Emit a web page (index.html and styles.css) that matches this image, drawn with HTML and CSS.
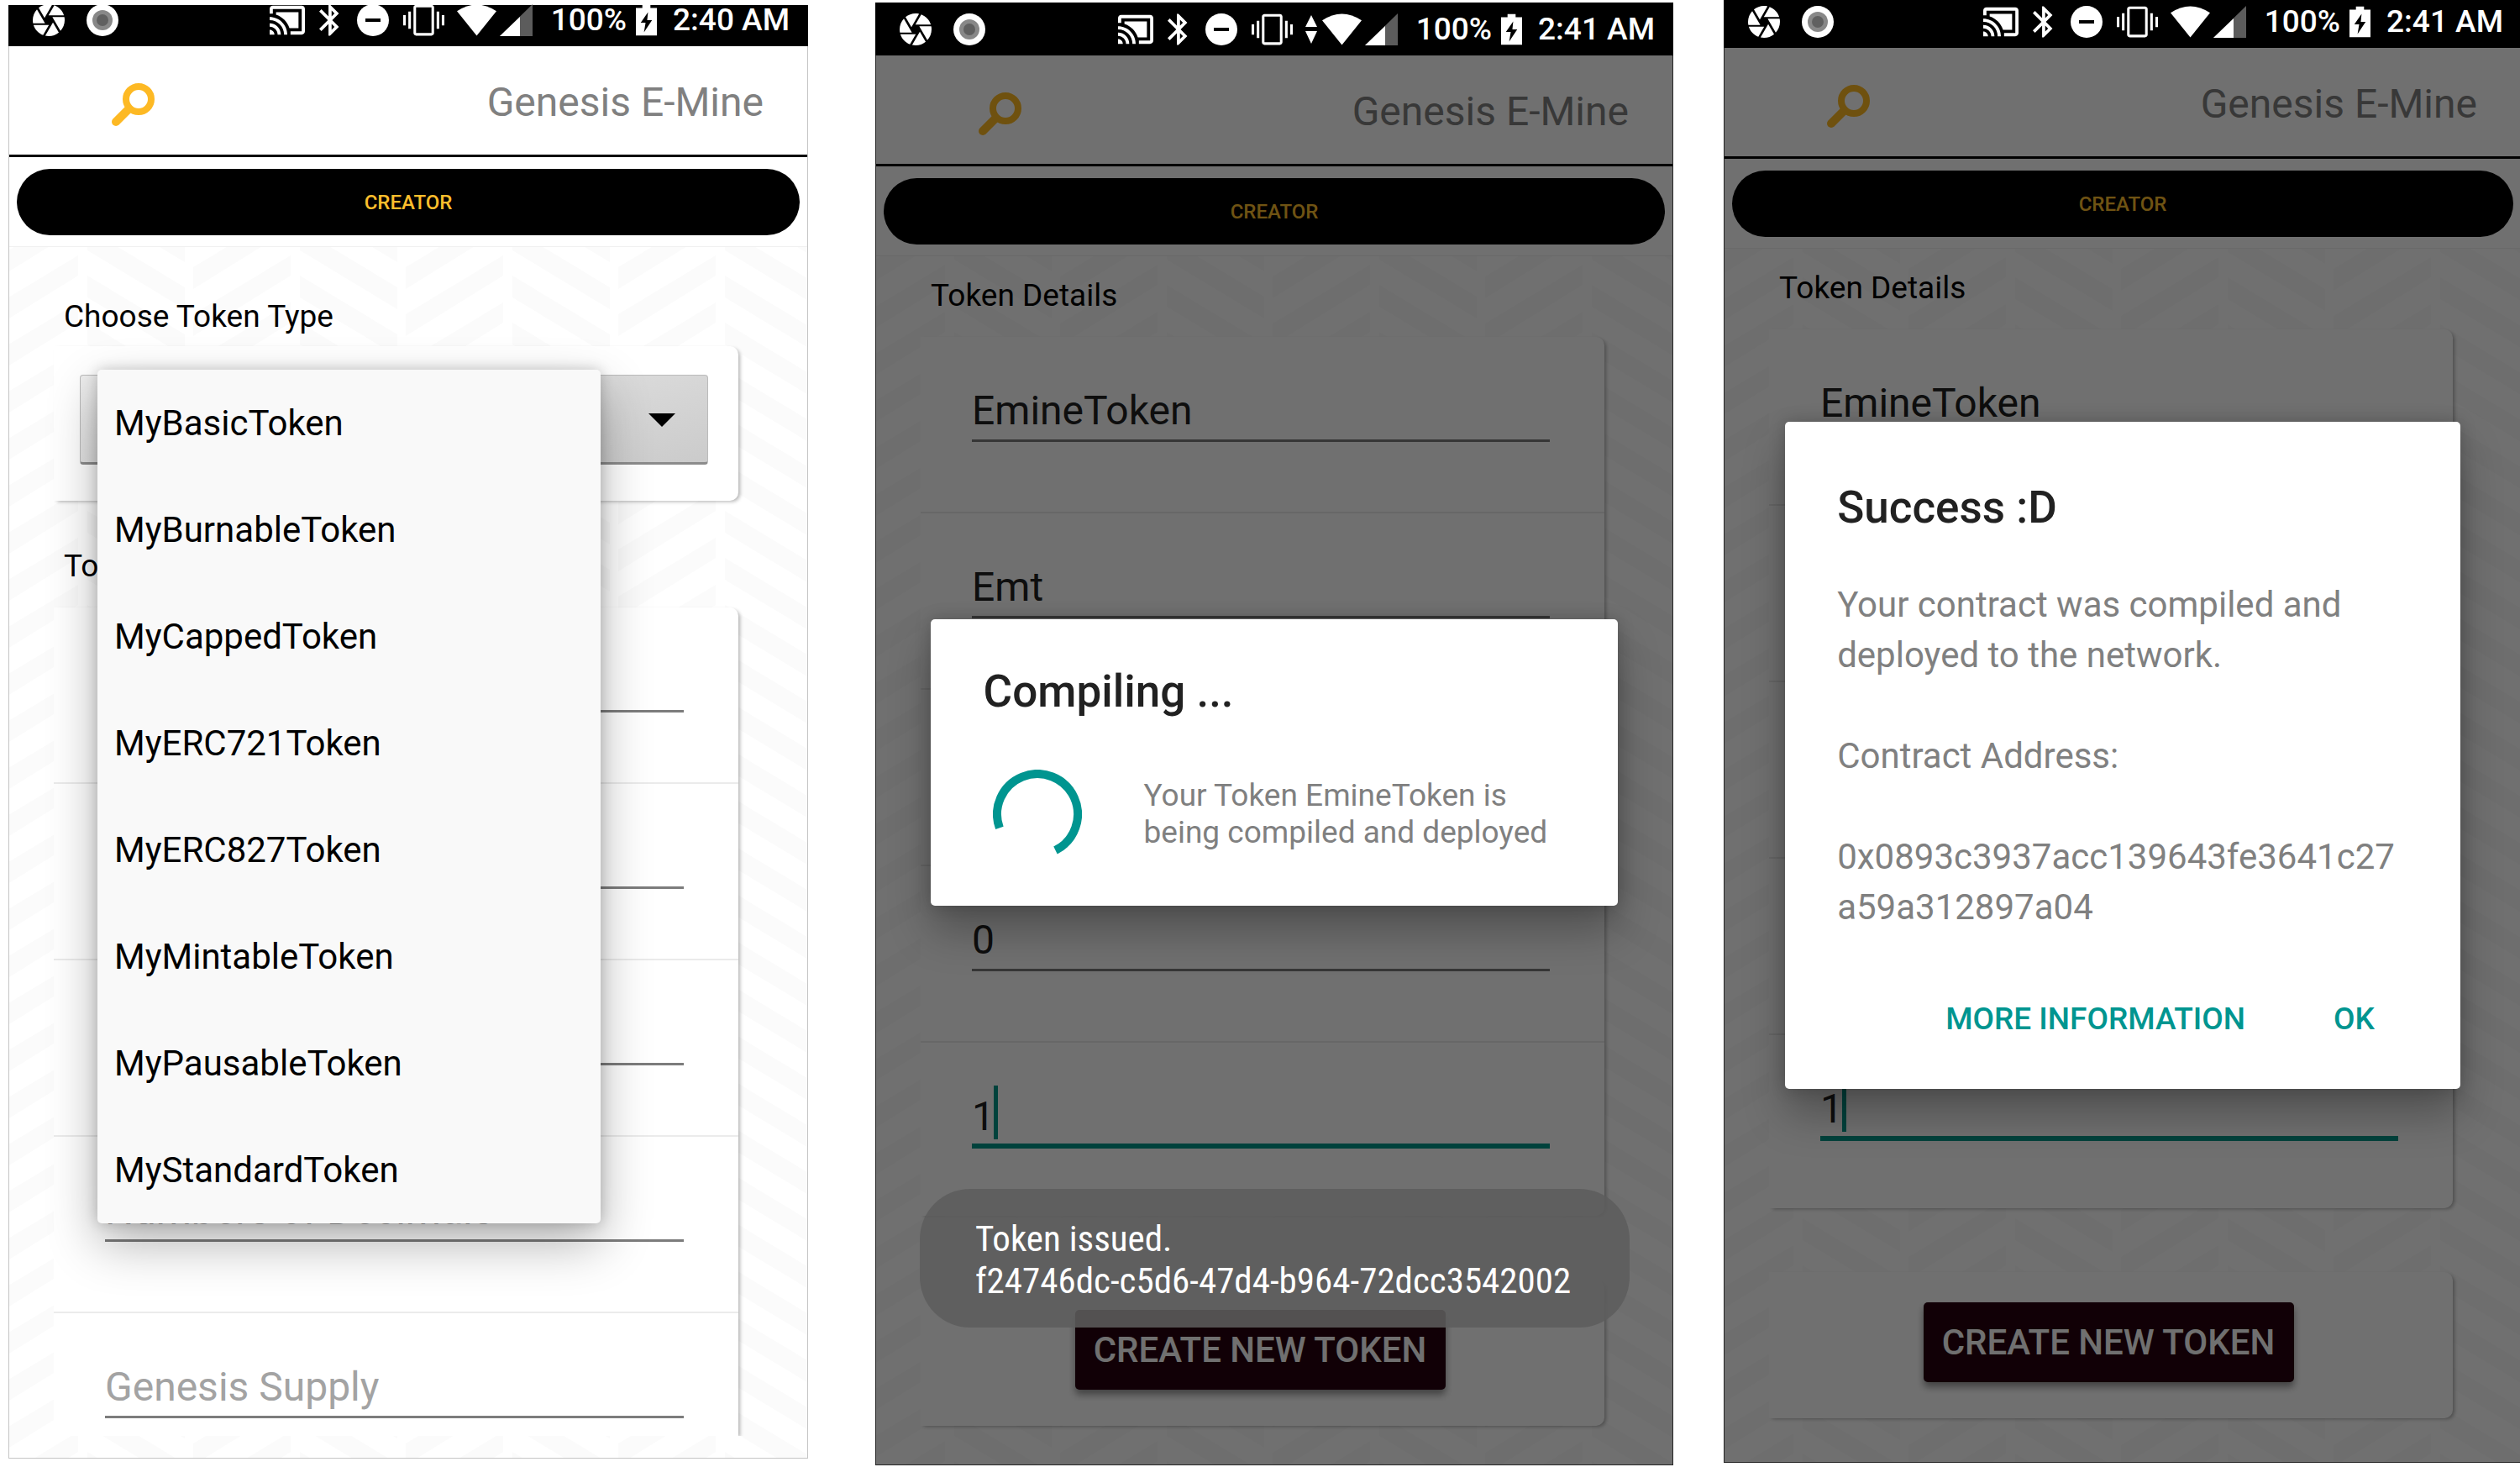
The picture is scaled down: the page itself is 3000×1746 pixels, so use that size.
FILE: index.html
```html
<!DOCTYPE html>
<html lang="en">
<head>
<meta charset="utf-8">
<meta name="viewport" content="width=device-width, initial-scale=1">
<title>Genesis E-Mine</title>
<link rel="stylesheet" href="styles.css">
</head>
<body>
<svg class="sprite" aria-hidden="true">
  <symbol id="aperture" viewBox="2 2 20 20"><path d="M9.4 10.5l4.77-8.26C13.47 2.09 12.75 2 12 2c-2.4 0-4.6.85-6.32 2.25l3.66 6.35.06-.1zM21.54 9c-.92-2.92-3.15-5.26-6-6.34L11.88 9h9.66zm.26 1h-7.49l.29.5 4.76 8.25C21 16.97 22 14.61 22 12c0-.69-.07-1.35-.2-2zM8.54 12l-3.9-6.75C3.01 7.03 2 9.39 2 12c0 .69.07 1.35.2 2h7.49l-1.15-2zm-6.08 3c.92 2.92 3.15 5.26 6 6.34L12.12 15H2.46zm11.27 0l-3.9 6.76c.7.15 1.42.24 2.17.24 2.4 0 4.6-.85 6.32-2.25l-3.66-6.35-.93 1.6z"/></symbol>
  <symbol id="record" viewBox="0 0 38 38"><circle cx="19" cy="19" r="19"/><circle cx="19" cy="19" r="12" fill="#888"/><circle cx="19" cy="19" r="7" fill="#606060"/></symbol>
  <symbol id="cast" viewBox="1 3 22 18"><path d="M1 18v3h3c0-1.66-1.34-3-3-3zm0-4v2c2.76 0 5 2.24 5 5h2c0-3.87-3.13-7-7-7zm18-7H5v1.63c3.96 1.28 7.09 4.41 8.37 8.37H19V7zM1 10v2c4.97 0 9 4.03 9 9h2c0-6.08-4.93-11-11-11zm20-7H3c-1.1 0-2 .9-2 2v3h2V5h18v14h-7v2h7c1.1 0 2-.9 2-2V5c0-1.1-.9-2-2-2z"/></symbol>
  <symbol id="bluetooth" viewBox="5 2 13 20"><path d="M17.71 7.71L12 2h-1v7.59L6.41 5 5 6.41 10.59 12 5 17.59 6.41 19 11 14.41V22h1l5.71-5.71-4.3-4.29 4.3-4.29zM13 5.83l1.88 1.88L13 9.59V5.83zm1.88 10.46L13 18.17v-3.76l1.88 1.88z"/></symbol>
  <symbol id="dnd" viewBox="0 0 38 38"><circle cx="19" cy="19" r="19"/><path d="M10 17h18v4H10z" fill="#000"/></symbol>
  <symbol id="vibrate" viewBox="0 3 24 18"><path d="M0 15h1.500V9H0v6zm3 2h1.500V7H3v10zm19.500-8v6h1.500V9h-1.500zm-3 8h1.500V7h-1.500v10zM16.500 3h-9C6.670 3 6 3.670 6 4.500v15c0 .83.67 1.500 1.500 1.500h9c.83 0 1.500-.67 1.500-1.500v-15c0-.83-.67-1.500-1.500-1.500zM16.500 19.500H7.500V4.500h9v15z"/></symbol>
  <symbol id="traffic" viewBox="0 0 14 34"><path d="M7 0l7 14H0zM0 19h14L7 34z"/></symbol>
  <symbol id="wifi" viewBox="0 0 48 38"><path d="M0 8Q24-8 48 8L24 38z"/></symbol>
  <symbol id="signal" viewBox="0 0 39 38"><path d="M39 0v38H0z" fill="#5c5c5c"/><path d="M24 15v23H0z"/></symbol>
  <symbol id="battery" viewBox="0 0 26 38"><path fill-rule="evenodd" d="M8 0h10v4h8v34H0V4h8zM15 9L6 22h6l-2 12 10-15h-6z"/></symbol>
  <symbol id="search" viewBox="0 -6 52 58"><circle cx="32" cy="19" r="15" fill="none" stroke="currentColor" stroke-width="8"/><path d="M20 31L5 46" stroke="currentColor" stroke-width="10" stroke-linecap="round"/></symbol>
</svg>

<main class="gallery">

  <section class="phone phone-picker" aria-label="Choose token type">
    <div class="status">
      <svg class="i-round"><use href="#aperture"/></svg>
      <svg class="i-round"><use href="#record"/></svg>
      <div class="status-right">
        <svg class="i-cast"><use href="#cast"/></svg>
        <svg class="i-bluetooth"><use href="#bluetooth"/></svg>
        <svg class="i-round"><use href="#dnd"/></svg>
        <svg class="i-vibrate"><use href="#vibrate"/></svg>
        <svg class="i-wifi"><use href="#wifi"/></svg>
        <svg class="i-signal"><use href="#signal"/></svg>
        <span>100%</span>
        <svg class="i-battery"><use href="#battery"/></svg>
        <time class="clock">2:40 AM</time>
      </div>
    </div>
    <div class="app">
      <header class="bar"><svg class="i-search"><use href="#search"/></svg><h1>Genesis E-Mine</h1></header>
      <nav class="tabs"><button class="tab" type="button">CREATOR</button></nav>
      <form class="content">
        <label class="caption" for="type">Choose Token Type</label>
        <div class="card picker">
          <select id="type" class="select"></select>
          <ul class="menu">
            <li><button type="button">MyBasicToken</button></li>
            <li><button type="button">MyBurnableToken</button></li>
            <li><button type="button">MyCappedToken</button></li>
            <li><button type="button">MyERC721Token</button></li>
            <li><button type="button">MyERC827Token</button></li>
            <li><button type="button">MyMintableToken</button></li>
            <li><button type="button">MyPausableToken</button></li>
            <li><button type="button">MyStandardToken</button></li>
          </ul>
        </div>
        <h2 class="caption">Token Details</h2>
        <div class="card fields">
          <div class="row"><input aria-label="Name"></div>
          <div class="row"><input aria-label="Symbol"></div>
          <div class="row"><input aria-label="Cap"></div>
          <div class="row"><input aria-label="Numbers of Decimals" placeholder="Numbers of Decimals"></div>
          <div class="row"><input aria-label="Genesis Supply" placeholder="Genesis Supply"></div>
        </div>
      </form>
    </div>
  </section>

  <section class="phone phone-compiling" aria-label="Compiling">
    <div class="status">
      <svg class="i-round"><use href="#aperture"/></svg>
      <svg class="i-round"><use href="#record"/></svg>
      <div class="status-right">
        <svg class="i-cast"><use href="#cast"/></svg>
        <svg class="i-bluetooth"><use href="#bluetooth"/></svg>
        <svg class="i-round"><use href="#dnd"/></svg>
        <svg class="i-vibrate"><use href="#vibrate"/></svg>
        <svg class="i-traffic"><use href="#traffic"/></svg>
        <svg class="i-wifi"><use href="#wifi"/></svg>
        <svg class="i-signal"><use href="#signal"/></svg>
        <span>100%</span>
        <svg class="i-battery"><use href="#battery"/></svg>
        <time class="clock">2:41 AM</time>
      </div>
    </div>
    <div class="app">
      <header class="bar"><svg class="i-search"><use href="#search"/></svg><h1>Genesis E-Mine</h1></header>
      <nav class="tabs"><button class="tab" type="button">CREATOR</button></nav>
      <form class="content">
        <h2 class="caption">Token Details</h2>
        <div class="card fields">
          <div class="row"><input aria-label="Name" value="EmineToken"></div>
          <div class="row"><input aria-label="Symbol" value="Emt"></div>
          <div class="row"><input aria-label="Cap"></div>
          <div class="row"><input aria-label="Numbers of Decimals" value="0"></div>
          <div class="row active"><input aria-label="Genesis Supply" value="1"><span class="caret"></span></div>
        </div>
        <div class="card submit"><button class="create" type="button">CREATE NEW TOKEN</button></div>
      </form>
      <div class="scrim">
        <div class="dialog progress" role="dialog" aria-labelledby="compiling">
          <h2 id="compiling">Compiling ...</h2>
          <div class="progress-body">
            <svg class="spinner" viewBox="0 0 106 106"><path d="M7.900 69.400A48 48 0 1 1 74.500 96" fill="none" stroke="#009590" stroke-width="10"/></svg>
            <p>Your Token EmineToken is<br>being compiled and deployed</p>
          </div>
        </div>
      </div>
      <div class="toast" role="status">Token issued.<br>f24746dc-c5d6-47d4-b964-72dcc3542002</div>
    </div>
  </section>

  <section class="phone phone-success" aria-label="Success">
    <div class="status">
      <svg class="i-round"><use href="#aperture"/></svg>
      <svg class="i-round"><use href="#record"/></svg>
      <div class="status-right">
        <svg class="i-cast"><use href="#cast"/></svg>
        <svg class="i-bluetooth"><use href="#bluetooth"/></svg>
        <svg class="i-round"><use href="#dnd"/></svg>
        <svg class="i-vibrate"><use href="#vibrate"/></svg>
        <svg class="i-wifi"><use href="#wifi"/></svg>
        <svg class="i-signal"><use href="#signal"/></svg>
        <span>100%</span>
        <svg class="i-battery"><use href="#battery"/></svg>
        <time class="clock">2:41 AM</time>
      </div>
    </div>
    <div class="app">
      <header class="bar"><svg class="i-search"><use href="#search"/></svg><h1>Genesis E-Mine</h1></header>
      <nav class="tabs"><button class="tab" type="button">CREATOR</button></nav>
      <form class="content">
        <h2 class="caption">Token Details</h2>
        <div class="card fields">
          <div class="row"><input aria-label="Name" value="EmineToken"></div>
          <div class="row"><input aria-label="Symbol"></div>
          <div class="row"><input aria-label="Cap"></div>
          <div class="row"><input aria-label="Numbers of Decimals"></div>
          <div class="row active"><input aria-label="Genesis Supply" value="1"><span class="caret"></span></div>
        </div>
        <div class="card submit"><button class="create" type="button">CREATE NEW TOKEN</button></div>
      </form>
      <div class="scrim">
        <div class="dialog result" role="dialog" aria-labelledby="success">
          <h2 id="success">Success :D</h2>
          <p>Your contract was compiled and deployed to the network.</p>
          <p>Contract Address:</p>
          <p class="address">0x0893c3937acc139643fe3641c27<wbr>a59a312897a04</p>
          <div class="actions"><button type="button">MORE INFORMATION</button><button type="button">OK</button></div>
        </div>
      </div>
    </div>
  </section>

</main>
</body>
</html>
```
FILE: styles.css
```css
* { box-sizing: border-box; }

body {
  margin: 0;
  background: #fff;
  color: #000;
  font-family: Roboto, "Liberation Sans", sans-serif;
  overflow: hidden;
}

h1, h2, p, ul { margin: 0; padding: 0; font-weight: 400; }
button, input, select { font-family: inherit; border-radius: 0; outline: 0; }
button { cursor: pointer; border: 0; padding: 0; background: none; }
.sprite { display: none; }

.gallery {
  display: flex;
  align-items: flex-start;
  padding-left: 10px;
  margin-right: -2px;
}

.phone { flex: 950 1 0; min-width: 0; }
.phone-picker { flex-grow: 952; margin-top: 6px; }
.phone-compiling { margin: 3px 60px 0 80px; }

/* status bar */
.status {
  display: flex;
  align-items: flex-end;
  height: 63px;
  padding: 0 22px 12px 29px;
  gap: 26px;
  background: #000;
  color: #fff;
  fill: #fff;
  font-size: 37px;
  font-weight: 500;
  line-height: 38px;
}
.phone-picker .status { height: 49px; }
.phone-success .status { height: 57px; }
.status svg { flex: none; height: 38px; }
.status-right { display: flex; align-items: center; margin-left: auto; }
.i-round { width: 38px; }
.status .i-cast { width: 42px; height: 36px; }
.i-bluetooth { width: 24px; margin: 0 21px 0 17px; }
.i-vibrate { width: 49px; margin: 0 15px 0 17px; }
.i-traffic { width: 14px; margin-right: 6px; }
.i-wifi { width: 47px; margin-right: 4px; }
.i-signal { width: 39px; margin-right: 22px; }
.i-battery { width: 25px; margin: 0 19px 0 11px; }

/* application frame */
.app {
  position: relative;
  border: solid #c4c4c4;
  border-width: 0 1px 1px;
}
.phone-compiling .app, .phone-success .app { border-color: #555; }
.bar {
  display: flex;
  align-items: center;
  justify-content: space-between;
  padding: 39px 52px 34px 122px;
  border-bottom: 3px solid #000;
}
.bar h1 { font-size: 48px; line-height: 56px; color: #808080; }
.i-search { width: 52px; height: 58px; margin: -1px 0; color: #fdb924; }
.tabs { padding: 14px 9px 13px; border-bottom: 1px solid #f0f0f0; }
.tab {
  display: block;
  width: 100%;
  height: 79px;
  border-radius: 40px;
  background: #000;
  color: #fdbe2c;
  font-size: 24px;
  font-weight: 500;
}

.content {
  padding: 25px 81px 46px 53px;
  background: #fff url("data:image/svg+xml,%3Csvg xmlns='http://www.w3.org/2000/svg' width='253' height='56'%3E%3Cg fill='%23fbfbfb'%3E%3Cpath d='M0-78l116 70v26L0-52zM0-22l116 70v26L0 4zM0 34l116 70v26L0 60zM242-46L126 24v26L242-22zM242 10L126 80v26L242 34zM242-102L126-32v26L242-76z'/%3E%3C/g%3E%3C/svg%3E") 93px 0;
}
.phone-picker .content { padding: 61px 82px 26px 53px; }
.phone-success .content { padding-bottom: 52px; }

.caption {
  display: block;
  padding-left: 12px;
  margin-bottom: 27px;
  font-size: 37px;
  line-height: 44px;
}
.phone-picker label.caption { margin-bottom: 13px; }

.card {
  background: #fff;
  border-radius: 0 10px 10px 0;
  box-shadow: 3px 2px 4px -1px rgba(0, 0, 0, .3);
}
.fields, .submit { clip-path: inset(-12px -12px -12px 0); }
.phone-picker .fields { border-bottom-right-radius: 0; clip-path: inset(-12px -12px 0 0); }

/* token type picker */
.picker { position: relative; padding: 34px 36px 43px 31px; margin-bottom: 56px; }
.select {
  appearance: none;
  display: block;
  width: 100%;
  height: 107px;
  border: 1px solid #bbb;
  border-bottom: 3px solid #8c8c8c;
  border-radius: 4px;
  background:
    url("data:image/svg+xml,%3Csvg xmlns='http://www.w3.org/2000/svg' width='32' height='18'%3E%3Cpath d='M0 2h32L16 18z'/%3E%3C/svg%3E") right 38px center no-repeat,
    linear-gradient(165deg, #eee, #cbcbcb);
}
.menu {
  position: absolute;
  z-index: 1;
  top: 28px;
  left: 52px;
  right: 164px;
  list-style: none;
  background: #f9f9f9;
  border-radius: 5px;
  box-shadow: 0 24px 60px rgba(0, 0, 0, .3), 0 0 16px rgba(0, 0, 0, .2);
}
.menu button {
  display: block;
  width: 100%;
  height: 127px;
  padding: 0 20px;
  color: #000;
  font-size: 42px;
  text-align: left;
}

/* form rows */
.row {
  position: relative;
  height: 210px;
  padding: 59px 65px 0 61px;
  border-bottom: 2px solid #ebebeb;
}
.row:last-child { height: 206px; border-bottom: 0; }
.phone-picker .row:last-child { height: 146px; }
.row input {
  display: block;
  width: 100%;
  height: 66px;
  padding: 0 0 7px;
  border: 0;
  border-bottom: 3px solid #7c7c7c;
  background: none;
  color: #212121;
  font-size: 48px;
  line-height: 56px;
}
.row input::placeholder { color: #a3a3a3; opacity: 1; }
.row.active input { height: 67px; padding-bottom: 5px; border-bottom: 6px solid #009688; }
.caret { position: absolute; top: 51px; left: 87px; width: 5px; height: 64px; background: #009688; }

.submit { display: flex; justify-content: center; margin-top: 76px; padding: 36px 6px 43px 0; }
.create {
  width: 441px;
  height: 95px;
  border-radius: 5px;
  background: #27020e;
  box-shadow: 0 6px 9px rgba(0, 0, 0, .4);
  color: #fff;
  font-size: 42px;
  font-weight: 500;
}

/* dialogs */
.scrim {
  position: absolute;
  inset: 0 -1px -1px;
  display: flex;
  align-items: center;
  justify-content: center;
  background: rgba(0, 0, 0, .56);
}
.phone-compiling .scrim { padding-top: 4px; }
.dialog {
  background: #fff;
  border-radius: 5px;
  box-shadow: 0 30px 50px rgba(0, 0, 0, .28), 0 0 20px rgba(0, 0, 0, .2);
  color: #808080;
}
.dialog h2 { color: #212121; font-size: 53px; font-weight: 500; line-height: 60px; }
.progress { width: 86.2%; padding: 56px 63px 56px; font-size: 37px; line-height: 44px; }
.progress-body { display: flex; align-items: center; gap: 74px; padding: 63px 0 0 11px; }
.spinner { flex: none; width: 106px; height: 106px; }
.result { width: 84.6%; padding: 72px 62px 61px; font-size: 42px; line-height: 60px; }
.result h2 { margin-bottom: 56px; }
.result p { margin-bottom: 60px; }
.result .address { margin-bottom: 81px; }
.actions { display: flex; justify-content: flex-end; gap: 105px; padding-right: 40px; }
.actions button { color: #009590; font-size: 37px; font-weight: 500; line-height: 44px; }

.toast {
  position: absolute;
  left: 52px;
  right: 51px;
  bottom: 163px;
  padding: 34px 60px 31px 66px;
  border-radius: 60px;
  background: rgba(93, 93, 93, .87);
  color: #fff;
  font-family: "Roboto Condensed", "Liberation Sans Narrow", Roboto, sans-serif;
  font-size: 43px;
  line-height: 50px;
}
```
